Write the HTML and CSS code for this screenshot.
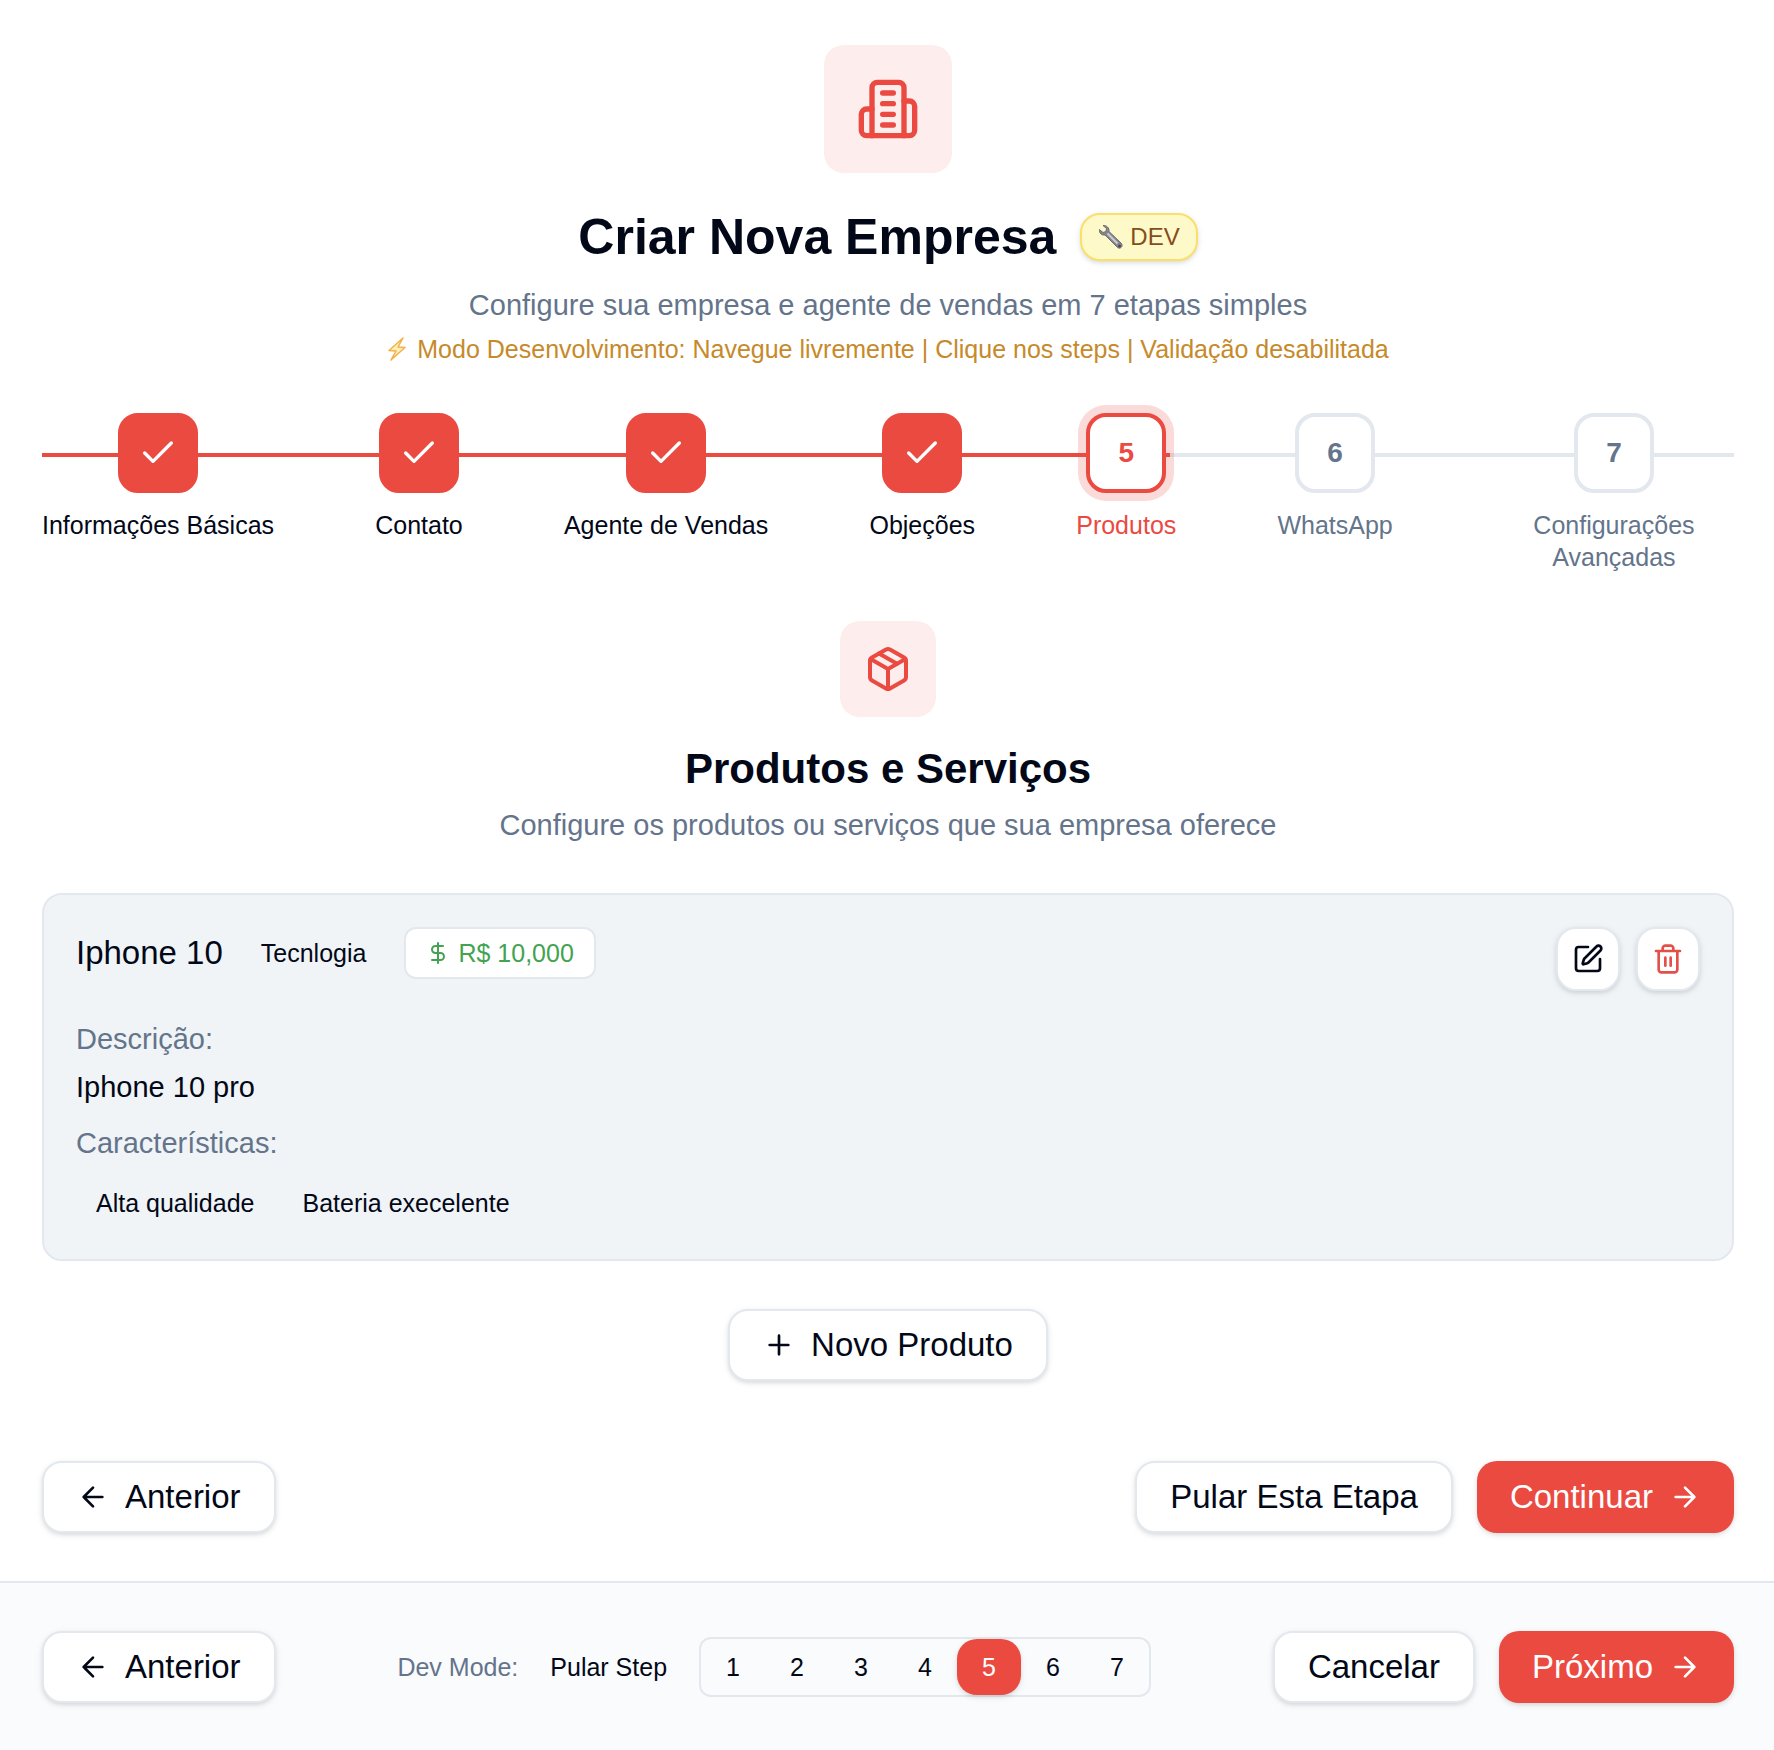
FILE: index.html
```html
<!DOCTYPE html>
<html lang="pt-BR">
<head>
  <meta charset="utf-8">
  <meta name="viewport" content="width=device-width, initial-scale=1">
  <title>Criar Nova Empresa</title>
  <link rel="stylesheet" href="styles.css">
</head>
<body>
  <svg class="sprite" aria-hidden="true">
    <symbol id="check" viewBox="0 0 24 24"><path d="M20 6 9 17l-5-5"/></symbol>
    <symbol id="arrow-left" viewBox="0 0 24 24"><path d="m12 19-7-7 7-7M19 12H5"/></symbol>
    <symbol id="arrow-right" viewBox="0 0 24 24"><path d="M5 12h14M12 5l7 7-7 7"/></symbol>
  </svg>

  <main class="wizard">
    <header class="intro">
      <div class="tile tile-large">
        <svg class="icon icon-64" viewBox="0 0 24 24" aria-hidden="true">
          <path d="M6 22V4a2 2 0 0 1 2-2h8a2 2 0 0 1 2 2v18Z"/>
          <path d="M6 12H4a2 2 0 0 0-2 2v6a2 2 0 0 0 2 2h2"/>
          <path d="M18 9h2a2 2 0 0 1 2 2v9a2 2 0 0 1-2 2h-2"/>
          <path d="M10 6h4M10 10h4M10 14h4M10 18h4"/>
        </svg>
      </div>
      <div class="title-row">
        <h1 class="title">Criar Nova Empresa</h1>
        <span class="dev-badge">
          <svg class="wrench" viewBox="0 0 26 26" aria-hidden="true">
            <path class="wrench-body" d="M5 1.500 8.500 4.500l-.5 3-3 1L1.500 5.500C1 9 3.500 11.500 7 11l12.500 12.500c2.500 2 6-1 4-4L11 7.500c.5-3.500-2.500-6.500-6-6Z"/>
            <path class="wrench-shine" d="m9.500 9.500 10 10"/>
            <circle class="wrench-hole" cx="21.500" cy="22" r="1.500"/>
          </svg>
          DEV
        </span>
      </div>
      <p class="lead">Configure sua empresa e agente de vendas em 7 etapas simples</p>
      <p class="dev-note">
        <svg class="bolt" viewBox="0 0 20 24" aria-hidden="true"><path d="M16 1 2 13.500l7 .5L4 23l14-12.500-7-.5Z"/></svg>
        Modo Desenvolvimento: Navegue livremente | Clique nos steps | Validação desabilitada
      </p>
    </header>

    <nav class="stepper" aria-label="Etapas">
      <div class="track"><div class="track-fill" style="width: 66.67%"></div></div>
      <ol class="steps">
        <li class="step"><button class="step-dot done" aria-label="Etapa 1"><svg class="icon icon-40"><use href="#check"/></svg></button><span class="step-label">Informações Básicas</span></li>
        <li class="step"><button class="step-dot done" aria-label="Etapa 2"><svg class="icon icon-40"><use href="#check"/></svg></button><span class="step-label">Contato</span></li>
        <li class="step"><button class="step-dot done" aria-label="Etapa 3"><svg class="icon icon-40"><use href="#check"/></svg></button><span class="step-label">Agente de Vendas</span></li>
        <li class="step"><button class="step-dot done" aria-label="Etapa 4"><svg class="icon icon-40"><use href="#check"/></svg></button><span class="step-label">Objeções</span></li>
        <li class="step current" aria-current="step"><button class="step-dot">5</button><span class="step-label">Produtos</span></li>
        <li class="step pending"><button class="step-dot">6</button><span class="step-label">WhatsApp</span></li>
        <li class="step pending"><button class="step-dot">7</button><span class="step-label">Configurações Avançadas</span></li>
      </ol>
    </nav>

    <section class="products">
      <div class="tile tile-small">
        <svg class="icon icon-48" viewBox="0 0 24 24" aria-hidden="true">
          <path d="m7.500 4.270 9 5.150"/>
          <path d="M21 8a2 2 0 0 0-1-1.730l-7-4a2 2 0 0 0-2 0l-7 4A2 2 0 0 0 3 8v8a2 2 0 0 0 1 1.730l7 4a2 2 0 0 0 2 0l7-4A2 2 0 0 0 21 16Z"/>
          <path d="m3.300 7 8.700 5 8.700-5M12 22V12"/>
        </svg>
      </div>
      <h2 class="section-title">Produtos e Serviços</h2>
      <p class="lead">Configure os produtos ou serviços que sua empresa oferece</p>

      <article class="card">
        <div class="card-head">
          <div class="card-info">
            <h3 class="card-name">Iphone 10</h3>
            <span class="tag">Tecnlogia</span>
            <span class="price">
              <svg class="icon icon-24" viewBox="0 0 24 24" aria-hidden="true"><path d="M12 2v20M17 5H9.500a3.500 3.500 0 0 0 0 7h5a3.500 3.500 0 0 1 0 7H6"/></svg>
              R$ 10,000
            </span>
          </div>
          <div class="card-tools">
            <button class="tool" aria-label="Editar">
              <svg class="icon icon-32" viewBox="0 0 24 24"><path d="M12 3H5a2 2 0 0 0-2 2v14a2 2 0 0 0 2 2h14a2 2 0 0 0 2-2v-7"/><path d="M18.375 2.625a1 1 0 0 1 3 3l-9.013 9.014a2 2 0 0 1-.853.505l-2.873.84a.5.5 0 0 1-.62-.62l.84-2.873a2 2 0 0 1 .506-.852z"/></svg>
            </button>
            <button class="tool danger" aria-label="Excluir">
              <svg class="icon icon-32" viewBox="0 0 24 24"><path d="M3 6h18M19 6v14c0 1-1 2-2 2H7c-1 0-2-1-2-2V6M8 6V4c0-1 1-2 2-2h4c1 0 2 1 2 2v2M10 11v6M14 11v6"/></svg>
            </button>
          </div>
        </div>
        <dl class="details">
          <dt>Descrição:</dt>
          <dd>Iphone 10 pro</dd>
          <dt>Características:</dt>
          <dd class="features"><span class="tag">Alta qualidade</span><span class="tag">Bateria execelente</span></dd>
        </dl>
      </article>

      <button class="btn">
        <svg class="icon icon-32" viewBox="0 0 24 24" aria-hidden="true"><path d="M5 12h14M12 5v14"/></svg>
        Novo Produto
      </button>
    </section>

    <div class="actions">
      <button class="btn"><svg class="icon icon-32"><use href="#arrow-left"/></svg>Anterior</button>
      <div class="group">
        <button class="btn">Pular Esta Etapa</button>
        <button class="btn primary">Continuar<svg class="icon icon-32"><use href="#arrow-right"/></svg></button>
      </div>
    </div>
  </main>

  <footer class="footer">
    <button class="btn"><svg class="icon icon-32"><use href="#arrow-left"/></svg>Anterior</button>
    <div class="dev-tools">
      <span class="dev-label">Dev Mode:</span>
      <button class="skip">Pular Step</button>
      <div class="pager">
        <button class="page">1</button>
        <button class="page">2</button>
        <button class="page">3</button>
        <button class="page">4</button>
        <button class="page active">5</button>
        <button class="page">6</button>
        <button class="page">7</button>
      </div>
    </div>
    <div class="group">
      <button class="btn">Cancelar</button>
      <button class="btn primary">Próximo<svg class="icon icon-32"><use href="#arrow-right"/></svg></button>
    </div>
  </footer>
</body>
</html>
```

FILE: styles.css
```css
:root {
  --red: #eb4a41;
  --red-soft: #fdeded;
  --ink: #020817;
  --muted: #64748b;
  --line: #e2e8ee;
  --shadow: 0 2px 6px rgba(0, 0, 0, 0.1), 0 2px 4px -1px rgba(0, 0, 0, 0.08);
}

* {
  box-sizing: border-box;
  margin: 0;
  padding: 0;
}

body {
  min-height: 100vh;
  display: flex;
  flex-direction: column;
  background: #fff;
  color: var(--ink);
  font-family: "Liberation Sans", Arial, sans-serif;
  font-size: 29px;
  line-height: 40px;
}

button {
  border: 0;
  background: none;
  color: inherit;
  font: inherit;
  cursor: pointer;
}

.sprite {
  display: none;
}

.icon {
  flex: none;
  fill: none;
  stroke: currentColor;
  stroke-width: 2;
  stroke-linecap: round;
  stroke-linejoin: round;
}

.icon-24 { width: 24px; height: 24px; }
.icon-32 { width: 32px; height: 32px; }
.icon-40 { width: 40px; height: 40px; }
.icon-48 { width: 48px; height: 48px; }
.icon-64 { width: 64px; height: 64px; }

.wizard {
  flex: 1;
  padding: 45px 40px 48px 42px;
}

.intro,
.products {
  display: flex;
  flex-direction: column;
  align-items: center;
  text-align: center;
}

.tile {
  display: grid;
  place-items: center;
  border-radius: 20px;
  background: var(--red-soft);
  color: var(--red);
}

.tile-large {
  width: 128px;
  height: 128px;
}

.tile-small {
  width: 96px;
  height: 96px;
}

.title-row {
  display: flex;
  align-items: center;
  gap: 24px;
  margin: 32px 0 16px;
}

.title {
  font-size: 50px;
  line-height: 64px;
}

.dev-badge {
  display: flex;
  align-items: center;
  gap: 6px;
  padding: 6px 16px;
  border: 2px solid #fae06a;
  border-radius: 20px;
  background: #fef9c8;
  color: #854d1e;
  font-size: 24px;
  line-height: 32px;
  box-shadow: var(--shadow);
}

.wrench {
  width: 26px;
  height: 26px;
}

.wrench-body {
  fill: #85878c;
  stroke: #6b6d72;
}

.wrench-shine {
  stroke: #c9cbd0;
  stroke-width: 2;
}

.wrench-hole {
  fill: #48494d;
}

.lead {
  color: var(--muted);
}

.dev-note {
  display: flex;
  align-items: center;
  gap: 10px;
  margin-top: 8px;
  color: #c68a2a;
  font-size: 25px;
  line-height: 32px;
}

.bolt {
  width: 20px;
  height: 24px;
  fill: #fff0b8;
  stroke: #f2b04a;
  stroke-width: 1.5;
  stroke-linejoin: round;
}

.stepper {
  position: relative;
  margin: 48px 0;
}

.track {
  position: absolute;
  top: 40px;
  left: 0;
  right: 0;
  height: 4px;
  background: var(--line);
}

.track-fill {
  height: 100%;
  background: var(--red);
}

.steps {
  position: relative;
  display: flex;
  justify-content: space-between;
  list-style: none;
}

.step {
  display: flex;
  flex-direction: column;
  align-items: center;
  gap: 16px;
  max-width: 240px;
}

.step-dot {
  display: grid;
  place-items: center;
  width: 80px;
  height: 80px;
  border: 4px solid var(--line);
  border-radius: 20px;
  background: #fff;
  font-size: 28px;
  font-weight: 700;
}

.step-dot.done {
  border-color: var(--red);
  background: var(--red);
  color: #fff;
}

.step-label {
  font-size: 25px;
  line-height: 32px;
  text-align: center;
}

.current {
  color: var(--red);
}

.current .step-dot {
  border-color: var(--red);
  box-shadow: 0 0 0 8px rgba(235, 74, 65, 0.2);
}

.pending {
  color: var(--muted);
}

.section-title {
  margin: 24px 0 8px;
  font-size: 42px;
  line-height: 56px;
}

.card {
  width: 100%;
  margin: 48px 0;
  padding: 32px;
  border: 2px solid var(--line);
  border-radius: 20px;
  background: #f0f4f7;
  text-align: left;
}

.card-head {
  display: flex;
  justify-content: space-between;
  align-items: flex-start;
}

.card-info {
  display: flex;
  align-items: center;
  gap: 18px;
}

.card-name {
  font-size: 33px;
  font-weight: 400;
  line-height: 48px;
}

.tag {
  padding: 8px 20px;
  font-size: 25px;
  line-height: 32px;
}

.price {
  display: flex;
  align-items: center;
  gap: 8px;
  padding: 8px 20px;
  border: 2px solid var(--line);
  border-radius: 12px;
  background: #fff;
  color: #43a34f;
  font-size: 25px;
  line-height: 32px;
}

.card-tools {
  display: flex;
  gap: 16px;
}

.tool {
  display: grid;
  place-items: center;
  width: 64px;
  height: 64px;
  border: 2px solid var(--line);
  border-radius: 20px;
  background: #fff;
  box-shadow: var(--shadow);
}

.danger {
  color: #e15049;
}

.details {
  margin-top: 28px;
}

.details dt {
  color: var(--muted);
}

.details dd {
  margin: 8px 0 16px;
}

.details .features {
  display: flex;
  gap: 8px;
  margin: 16px 0 0;
}

.btn {
  display: flex;
  align-items: center;
  justify-content: center;
  gap: 16px;
  padding: 10px 33px;
  border: 2px solid var(--line);
  border-radius: 20px;
  background: #fff;
  font-size: 33px;
  line-height: 48px;
  white-space: nowrap;
  box-shadow: var(--shadow);
}

.primary {
  padding: 12px 33px;
  border: 0;
  background: var(--red);
  color: #fff;
}

.actions {
  display: flex;
  justify-content: space-between;
  margin-top: 80px;
}

.group {
  display: flex;
  gap: 24px;
}

.footer {
  display: flex;
  align-items: center;
  justify-content: space-between;
  padding: 48px 40px 47px 42px;
  border-top: 2px solid var(--line);
  background: #fafbfd;
}

.dev-tools {
  display: flex;
  align-items: center;
  gap: 16px;
  font-size: 25px;
  line-height: 32px;
}

.dev-label {
  color: var(--muted);
}

.skip {
  padding: 12px 16px;
}

.pager {
  display: flex;
  border: 2px solid var(--line);
  border-radius: 12px;
}

.page {
  width: 64px;
  height: 56px;
}

.active {
  border-radius: 20px;
  background: var(--red);
  color: #fff;
  box-shadow: var(--shadow);
}
```
